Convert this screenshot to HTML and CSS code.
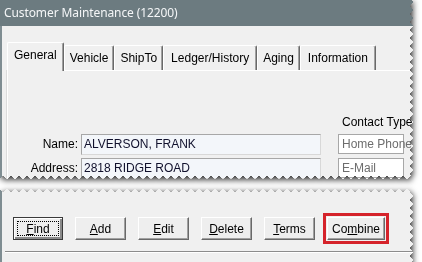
FILE: index.html
```html
<!DOCTYPE html>
<html lang="en">
<head>
    <meta charset="UTF-8">
    <meta name="viewport" content="width=device-width, initial-scale=1.0">
    <title>Customer Maintenance</title>
    <link rel="stylesheet" href="styles.css">
</head>
<body>
    <div class="piece">
        <div class="sheet sheet-top">
            <div class="titlebar">Customer Maintenance (12200)</div>
            <div class="win-body">
                <div class="tabs">
                    <div class="tab is-active">General</div>
                    <div class="tab">Vehicle</div>
                    <div class="tab">ShipTo</div>
                    <div class="tab tab-wide">Ledger/History</div>
                    <div class="tab">Aging</div>
                    <div class="tab tab-wide">Information</div>
                </div>
                <div class="tab-panel">
                    <div class="form-grid">
                        <span></span>
                        <span></span>
                        <span class="col-head">Contact Type</span>

                        <label class="field-label" for="custName">Name:</label>
                        <div class="text-input" id="custName">ALVERSON, FRANK</div>
                        <div class="contact-box">Home Phone</div>

                        <label class="field-label" for="custAddress">Address:</label>
                        <div class="text-input" id="custAddress">2818 RIDGE ROAD</div>
                        <div class="contact-box">E-Mail</div>
                    </div>
                </div>
            </div>
        </div>
    </div>

    <div class="piece piece-bottom">
        <div class="sheet sheet-bottom">
            <div class="button-bar">
                <button class="btn btn-default btn-find"><span><u>F</u>ind</span></button>
                <button class="btn"><u>A</u>dd</button>
                <button class="btn"><u>E</u>dit</button>
                <button class="btn"><u>D</u>elete</button>
                <button class="btn"><u>T</u>erms</button>
                <button class="btn btn-wide is-marked">Co<u>m</u>bine</button>
            </div>
            <div class="status-rule"></div>
        </div>
    </div>
</body>
</html>
```

FILE: styles.css
```css
body, html {
    margin: 0;
    height: 100%;
    overflow: hidden;
    background: #fff;
    font-family: "Liberation Sans", Arial, sans-serif;
    font-size: 12px;
    color: #000;
}

/* torn screenshot pieces */
.piece {
    width: 414px;
    filter: drop-shadow(1px 2px 3px rgba(0,0,0,0.85));
}

.piece-bottom {
    margin-top: 8px;
}

.sheet {
    background: #f0f0f0;
    overflow: hidden;
}

.sheet-top {
    height: 180px;
    -webkit-mask:
        conic-gradient(from -45deg at bottom, #0000, #000 1deg 89deg, #0000 90deg) 50% 100% / 8px 100% repeat-x,
        conic-gradient(from -135deg at right, #0000, #000 1deg 89deg, #0000 90deg) 100% 50% / 100% 8px repeat-y;
    -webkit-mask-composite: source-in;
    mask:
        conic-gradient(from -45deg at bottom, #0000, #000 1deg 89deg, #0000 90deg) 50% 100% / 8px 100% repeat-x,
        conic-gradient(from -135deg at right, #0000, #000 1deg 89deg, #0000 90deg) 100% 50% / 100% 8px repeat-y;
    mask-composite: intersect;
}

.sheet-bottom {
    height: 80px;
    border-left: 2px solid #7f8d92;
    -webkit-mask:
        conic-gradient(from 135deg at top, #0000, #000 1deg 89deg, #0000 90deg) 50% 0 / 8px 100% repeat-x,
        conic-gradient(from -135deg at right, #0000, #000 1deg 89deg, #0000 90deg) 100% 50% / 100% 8px repeat-y;
    -webkit-mask-composite: source-in;
    mask:
        conic-gradient(from 135deg at top, #0000, #000 1deg 89deg, #0000 90deg) 50% 0 / 8px 100% repeat-x,
        conic-gradient(from -135deg at right, #0000, #000 1deg 89deg, #0000 90deg) 100% 50% / 100% 8px repeat-y;
    mask-composite: intersect;
}

/* window */
.titlebar {
    height: 26px;
    line-height: 26px;
    padding-left: 4px;
    background: #6c7b80;
    color: #f4f6f7;
    font-family: "Noto Sans", "Open Sans", sans-serif;
    font-size: 12px;
    letter-spacing: -0.1px;
    white-space: nowrap;
}

.win-body {
    border-left: 2px solid #7f8d92;
    padding: 16px 0 0 5px;
    height: 200px;
}

/* tabs */
.tabs {
    display: flex;
    align-items: flex-end;
    height: 28px;
}

.tab {
    height: 25px;
    line-height: 24px;
    padding: 0 5px;
    box-sizing: border-box;
    border-top: 1px solid #fff;
    border-left: 1px solid #fff;
    border-right: 1px solid #696969;
    box-shadow: inset -1px 0 #a0a0a0;
    border-radius: 2px 2px 0 0;
    white-space: nowrap;
}

.tab-wide {
    padding: 0 7px;
}

.tab.is-active {
    position: relative;
    z-index: 1;
    height: 29px;
    margin-bottom: -1px;
    line-height: 25px;
    padding: 0 6px;
    background: #f0f0f0;
}

.tab-panel {
    border-top: 1px solid #fff;
    border-left: 1px solid #fff;
    box-shadow: -1px 0 #dcdcdc;
    padding-top: 42px;
}

.form-grid {
    display: grid;
    grid-template-columns: 70px 240px 80px;
    grid-template-rows: 18px 21px 21px;
    column-gap: 3px;
    row-gap: 3px;
}

.col-head {
    margin-left: 18px;
    line-height: 18px;
    white-space: nowrap;
}

.field-label {
    text-align: right;
    line-height: 21px;
}

.text-input {
    box-sizing: border-box;
    height: 21px;
    line-height: 19px;
    padding-left: 2px;
    background: #f3f6fa;
    border: 1px solid #a7a7a7;
    border-right-color: #d8d8d8;
    border-bottom-color: #d8d8d8;
    color: #10102c;
    white-space: nowrap;
}

.contact-box {
    box-sizing: border-box;
    margin-left: 14px;
    height: 20px;
    line-height: 18px;
    padding-left: 3px;
    background: #fff;
    border: 1px solid #a7a7a7;
    color: #6d6d6d;
    white-space: nowrap;
}

/* buttons */
.button-bar {
    display: flex;
    gap: 12px;
    padding: 29px 0 0 11px;
}

.btn {
    box-sizing: border-box;
    width: 51px;
    height: 23px;
    padding: 0;
    background: #eeeeee;
    border: 1px solid;
    border-color: #fff #696969 #696969 #fff;
    box-shadow: inset -1px -1px #a0a0a0;
    font-family: "Liberation Sans", Arial, sans-serif;
    font-size: 12px;
    color: #000;
}

.btn-find {
    width: 50px;
}

.btn-default {
    position: relative;
    border: 1px solid #3a3a3a;
    box-shadow: inset 1px 1px #fff, inset -2px -2px #8a8a8a;
}

.btn-default::after {
    content: "";
    position: absolute;
    inset: 3px;
    border: 1px dotted #000;
}

.btn-wide {
    width: 58px;
}

.is-marked {
    outline: 3px solid #d5232b;
    outline-offset: 1px;
}

.status-rule {
    margin: 11px 0 0 3px;
    height: 1px;
    background: #8c8c8c;
    border-bottom: 1px solid #fff;
}
```
